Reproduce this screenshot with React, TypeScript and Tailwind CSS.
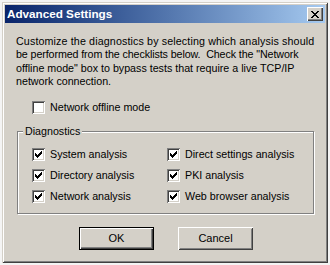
import React from "react";

function CheckMark() {
  const cols = [2, 3, 4, 3, 2, 1, 0];
  return (
    <svg width="7" height="7" viewBox="0 0 7 7" shapeRendering="crispEdges">
      {cols.map((y, x) => (
        <rect key={x} x={x} y={y} width={1} height={3} fill="#000" />
      ))}
    </svg>
  );
}

function Check({ checked, label }: { checked: boolean; label: string }) {
  return (
    <div className="flex items-center h-[13px]">
      <span className="w-[13px] h-[13px] shrink-0 bg-white flex items-center justify-center shadow-[inset_1px_1px_#808080,inset_-1px_-1px_#ffffff,inset_2px_2px_#404040,inset_-2px_-2px_#d4d0c8]">
        {checked && <CheckMark />}
      </span>
      <span className="ml-[5px] whitespace-nowrap">{label}</span>
    </div>
  );
}

export default function App() {
  return (
    <div
      className="w-[330px] h-[265px] bg-[#f4f4f4] overflow-hidden pt-[2px] pl-[2px] text-black"
      style={{ fontFamily: "Tahoma, 'Liberation Sans', Arial, sans-serif" }}
    >
      <div className="w-[326px] h-[261px] bg-[#d4d0c8] p-[3px] flex flex-col shadow-[inset_1px_1px_#d4d0c8,inset_-1px_-1px_#404040,inset_2px_2px_#ffffff,inset_-2px_-2px_#808080]">
        {/* Title bar */}
        <div className="h-[18px] flex items-center bg-gradient-to-r from-[#0a246a] to-[#a6caf0] pl-[2px] pr-[2px]">
          <span className="text-white font-bold text-[11.7px] leading-none flex-1">
            Advanced Settings
          </span>
          <div className="w-[16px] h-[14px] bg-[#d4d0c8] flex items-center justify-center shadow-[inset_1px_1px_#ffffff,inset_-1px_-1px_#404040,inset_-2px_-2px_#808080]">
            <svg width="8" height="7" viewBox="0 0 8 7" shapeRendering="crispEdges">
              {[0, 1, 2, 3, 4, 5, 6].map((i) => (
                <React.Fragment key={i}>
                  <rect x={i} y={i} width={2} height={1} fill="#000" />
                  <rect x={6 - i} y={i} width={2} height={1} fill="#000" />
                </React.Fragment>
              ))}
            </svg>
          </div>
        </div>

        {/* Body */}
        <div className="flex-1 flex flex-col text-[10.7px]">
          <div className="mt-[12px] ml-[11px] leading-[13.4px] whitespace-nowrap">
            <div className="tracking-[0.13px]">
              Customize the diagnostics by selecting which analysis should
            </div>
            <div className="tracking-[-0.1px]">
              be performed from the checklists below.&nbsp; Check the "Network
            </div>
            <div>offline mode" box to bypass tests that require a live TCP/IP</div>
            <div>network connection.</div>
          </div>

          <div className="mt-[12px] ml-[27px]">
            <Check checked={false} label="Network offline mode" />
          </div>

          <fieldset className="mt-[11px] ml-[12px] w-[297px] h-[89px] border border-[#808080] shadow-[inset_1px_1px_#ffffff,1px_1px_#ffffff] pt-[10px]">
            <legend className="ml-[5px] px-[2px] bg-[#d4d0c8] leading-[13px]">
              Diagnostics
            </legend>
            <div className="grid grid-cols-[135px_1fr] gap-y-[8px] pl-[14px]">
              <Check checked label="System analysis" />
              <Check checked label="Direct settings analysis" />
              <Check checked label="Directory analysis" />
              <Check checked label="PKI analysis" />
              <Check checked label="Network analysis" />
              <Check checked label="Web browser analysis" />
            </div>
          </fieldset>

          <div className="mt-[13px] ml-[74px] flex gap-[24px]">
            <button className="w-[75px] h-[23px] bg-[#d4d0c8] border border-black shadow-[inset_1px_1px_#ffffff,inset_-1px_-1px_#404040,inset_-2px_-2px_#808080] text-[11px]">
              OK
            </button>
            <button className="w-[75px] h-[23px] bg-[#d4d0c8] shadow-[inset_1px_1px_#ffffff,inset_-1px_-1px_#404040,inset_2px_2px_#d4d0c8,inset_-2px_-2px_#808080] text-[11px]">
              Cancel
            </button>
          </div>
        </div>
      </div>
    </div>
  );
}
